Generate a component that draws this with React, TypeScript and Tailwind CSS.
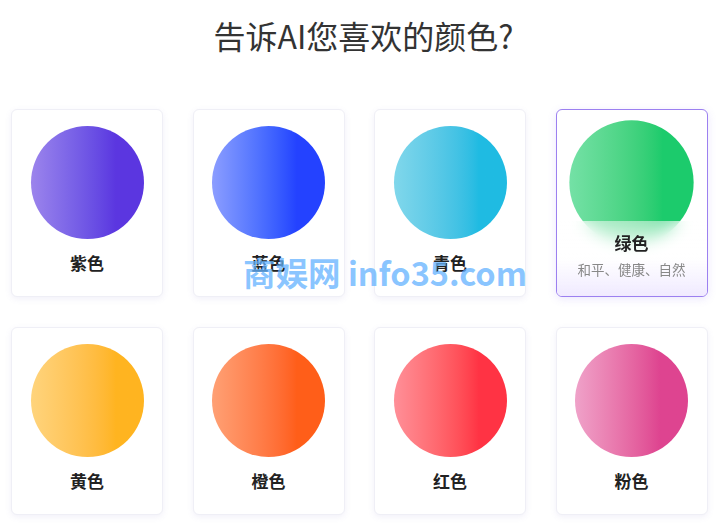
import React from 'react';

type ColorItem = {
  name: string;
  circle: string;
  desc?: string;
  active?: boolean;
};

const colors: ColorItem[] = [
  { name: '紫色', circle: 'bg-linear-to-r from-[#9c84ec] to-[#5b36e0] to-75%' },
  { name: '蓝色', circle: 'bg-linear-to-r from-[#8c9dff] to-[#2442ff] to-75%' },
  { name: '青色', circle: 'bg-linear-to-r from-[#80d7eb] to-[#1fbbe2] to-75%' },
  {
    name: '绿色',
    circle: 'bg-linear-to-r from-[#74e1a6] to-[#1ccb6c] to-75%',
    desc: '和平、健康、自然',
    active: true,
  },
  { name: '黄色', circle: 'bg-linear-to-r from-[#ffd47c] to-[#ffb420] to-75%' },
  { name: '橙色', circle: 'bg-linear-to-r from-[#ffa074] to-[#ff5e19] to-75%' },
  { name: '红色', circle: 'bg-linear-to-r from-[#ff8f98] to-[#ff3344] to-75%' },
  { name: '粉色', circle: 'bg-linear-to-r from-[#efa2c9] to-[#de4490] to-75%' },
];

const ColorCard: React.FC<{ item: ColorItem }> = ({ item }) => {
  if (item.active) {
    return (
      <div className="relative h-[188px] overflow-hidden rounded-[6px] border border-[#9c80f0] bg-white shadow-[0_2px_8px_rgba(124,92,240,0.15)]">
        <div className="flex justify-center pt-[16px]">
          <div className={`h-[113px] w-[113px] scale-110 rounded-full ${item.circle}`} />
        </div>
        <div className="absolute inset-x-0 bottom-0 flex h-[75px] flex-col items-center bg-linear-to-b from-white/50 via-white/90 to-[#f0eaff] pt-[10px] backdrop-blur-[8px]">
          <div className="text-[17px] leading-[24px] font-semibold text-[#222]">{item.name}</div>
          <div className="mt-[4px] text-[13.5px] leading-[20px] text-[#888]">{item.desc}</div>
        </div>
      </div>
    );
  }

  return (
    <div className="flex h-[188px] flex-col items-center rounded-[6px] border border-[#efeff6] bg-white pt-[16px] shadow-[0_2px_6px_rgba(120,110,200,0.10)]">
      <div className={`h-[113px] w-[113px] rounded-full ${item.circle}`} />
      <div className="mt-[12px] text-[17px] leading-[24px] font-semibold text-[#222]">{item.name}</div>
    </div>
  );
};

const App: React.FC = () => {
  return (
    <div className="relative min-h-screen w-[727px] bg-white font-['Noto_Sans_CJK_SC','Noto_Sans',sans-serif]">
      <h1 className="pt-[13px] text-center text-[32px] leading-[44px] font-normal text-[#333]">
        告诉AI您喜欢的颜色?
      </h1>

      <div className="mt-[52px] grid grid-cols-[repeat(4,152px)] gap-x-[29.5px] gap-y-[30px] pl-[11px]">
        {colors.map(c => (
          <ColorCard key={c.name} item={c} />
        ))}
      </div>

      <div className="pointer-events-none absolute top-[251px] left-[243px] text-[32.5px] leading-[42px] font-bold whitespace-nowrap text-[rgba(100,178,255,0.75)]">
        商娱网 info35.com
      </div>
    </div>
  );
};

export default App;
